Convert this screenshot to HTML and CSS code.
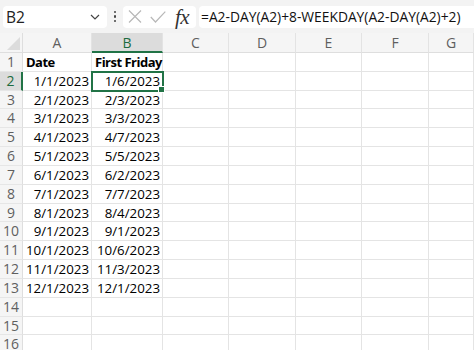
FILE: index.html
```html
<!DOCTYPE html>
<html lang="en">
<head>
  <meta charset="UTF-8">
  <title>First Friday</title>
<link rel="stylesheet" href="styles.css">
</head>
<body>
<div class="formulaBar">
  <div class="nameBox">
    <span>B2</span>
    <svg class="chevron" width="10" height="6" viewBox="0 0 10 6"><path d="M1 1 L5 5 L9 1" fill="none" stroke="#444" stroke-width="1.2"/></svg>
  </div>
  <div class="dots"><i></i><i></i><i></i></div>
  <div class="toolBox">
    <svg width="14" height="13" viewBox="0 0 14 13"><path d="M1 0.5 L13 12.5 M13 0.5 L1 12.5" stroke="#b8b8b8" stroke-width="1.2" fill="none"/></svg>
    <svg width="16" height="12" viewBox="0 0 16 12"><path d="M0.8 6 L5.5 11 L15.3 0.6" stroke="#b8b8b8" stroke-width="1.2" fill="none"/></svg>
    <span class="fx">fx</span>
  </div>
  <div class="formulaInput">=A2-DAY(A2)+8-WEEKDAY(A2-DAY(A2)+2)</div>
</div>

<div class="sheet">
  <div class="corner"></div><div class="colHead">A</div><div class="colHead colHead-active">B</div><div class="colHead">C</div><div class="colHead">D</div><div class="colHead">E</div><div class="colHead">F</div><div class="colHead">G</div>

  <div class="rowHead">1</div><div class="cell bold">Date</div><div class="cell bold">First Friday</div><div class="cell"></div><div class="cell"></div><div class="cell"></div><div class="cell"></div><div class="cell"></div>
  <div class="rowHead rowHead-active">2</div><div class="cell num">1/1/2023</div><div class="cell num cell-active">1/6/2023</div><div class="cell"></div><div class="cell"></div><div class="cell"></div><div class="cell"></div><div class="cell"></div>
  <div class="rowHead">3</div><div class="cell num">2/1/2023</div><div class="cell num">2/3/2023</div><div class="cell"></div><div class="cell"></div><div class="cell"></div><div class="cell"></div><div class="cell"></div>
  <div class="rowHead">4</div><div class="cell num">3/1/2023</div><div class="cell num">3/3/2023</div><div class="cell"></div><div class="cell"></div><div class="cell"></div><div class="cell"></div><div class="cell"></div>
  <div class="rowHead">5</div><div class="cell num">4/1/2023</div><div class="cell num">4/7/2023</div><div class="cell"></div><div class="cell"></div><div class="cell"></div><div class="cell"></div><div class="cell"></div>
  <div class="rowHead">6</div><div class="cell num">5/1/2023</div><div class="cell num">5/5/2023</div><div class="cell"></div><div class="cell"></div><div class="cell"></div><div class="cell"></div><div class="cell"></div>
  <div class="rowHead">7</div><div class="cell num">6/1/2023</div><div class="cell num">6/2/2023</div><div class="cell"></div><div class="cell"></div><div class="cell"></div><div class="cell"></div><div class="cell"></div>
  <div class="rowHead">8</div><div class="cell num">7/1/2023</div><div class="cell num">7/7/2023</div><div class="cell"></div><div class="cell"></div><div class="cell"></div><div class="cell"></div><div class="cell"></div>
  <div class="rowHead">9</div><div class="cell num">8/1/2023</div><div class="cell num">8/4/2023</div><div class="cell"></div><div class="cell"></div><div class="cell"></div><div class="cell"></div><div class="cell"></div>
  <div class="rowHead">10</div><div class="cell num">9/1/2023</div><div class="cell num">9/1/2023</div><div class="cell"></div><div class="cell"></div><div class="cell"></div><div class="cell"></div><div class="cell"></div>
  <div class="rowHead">11</div><div class="cell num">10/1/2023</div><div class="cell num">10/6/2023</div><div class="cell"></div><div class="cell"></div><div class="cell"></div><div class="cell"></div><div class="cell"></div>
  <div class="rowHead">12</div><div class="cell num">11/1/2023</div><div class="cell num">11/3/2023</div><div class="cell"></div><div class="cell"></div><div class="cell"></div><div class="cell"></div><div class="cell"></div>
  <div class="rowHead">13</div><div class="cell num">12/1/2023</div><div class="cell num">12/1/2023</div><div class="cell"></div><div class="cell"></div><div class="cell"></div><div class="cell"></div><div class="cell"></div>
  <div class="rowHead">14</div><div class="cell"></div><div class="cell"></div><div class="cell"></div><div class="cell"></div><div class="cell"></div><div class="cell"></div><div class="cell"></div>
  <div class="rowHead">15</div><div class="cell"></div><div class="cell"></div><div class="cell"></div><div class="cell"></div><div class="cell"></div><div class="cell"></div><div class="cell"></div>
  <div class="rowHead">16</div><div class="cell"></div><div class="cell"></div><div class="cell"></div><div class="cell"></div><div class="cell"></div><div class="cell"></div><div class="cell"></div>
</div>
</body>
</html>
```

FILE: styles.css
```css
html, body {margin:0; padding:0; background:#fff; overflow:hidden;}
body {width:474px; height:350px; font-family:"Open Sans", "Noto Sans", sans-serif; color:#000;}

.formulaBar {display:flex; align-items:center; height:33px; padding:0 0 0 3px; background:#f3f3f3; box-sizing:border-box;}
.nameBox {display:flex; align-items:center; justify-content:space-between; width:104px; height:22px; padding:0 7px 0 3px;
          box-sizing:border-box; background:#fff; border-radius:4px; font-size:15.5px; color:#222;}
.dots {display:flex; flex-direction:column; gap:2px; width:16px; align-items:center;}
.dots i {display:block; width:2.5px; height:2.5px; border-radius:50%; background:#444;}
.toolBox {display:flex; align-items:center; width:73px; height:22px; padding:0 0 0 5px; box-sizing:border-box;
          background:#fff; border-radius:4px; gap:8px;}
.fx {font-family:"Liberation Serif", serif; font-style:italic; font-size:21px; line-height:22px; color:#333; margin-left:1px; letter-spacing:-0.5px;}
.formulaInput {flex:1; height:22px; margin-left:3px; padding-left:2px; background:#fff; border-radius:4px 0 0 4px;
               font-size:13.8px; line-height:22px; color:#111; white-space:nowrap; overflow:hidden;}

.sheet {display:grid; grid-template-columns:23px 69px 71px 66px 67px 66px 67px 1fr;
        grid-template-rows:20px repeat(16, 18.83px); font-size:13.3px;}
.corner {background:#f5f5f5; border-right:1px solid #dedede; border-bottom:1px solid #dedede; position:relative;}
.corner::after {content:""; position:absolute; right:2px; bottom:2px; width:0; height:0;
                border-left:13px solid transparent; border-bottom:13px solid #dcdcdc;}
.colHead {background:#f5f5f5; border-right:1px solid #e3e3e3; border-bottom:1px solid #dedede; text-align:center;
          font-size:14px; line-height:19px; color:#5f5f5f;}
.colHead-active {background:#dcdcdc; color:#1d6b40; border-bottom:2px solid #217346;}
.rowHead {background:#f5f5f5; border-right:1px solid #dedede; border-bottom:1px solid #e6e6e6; text-align:center;
          font-size:14px; line-height:18px; color:#5f5f5f;}
.rowHead-active {background:#dcdcdc; color:#1d6b40; border-right:2px solid #217346;}
.cell {border-right:1px solid #e4e4e4; border-bottom:1px solid #e4e4e4; line-height:18px; padding:0 2px 0 3px;
       white-space:nowrap; overflow:visible;}
.num {text-align:right;}
.bold {font-weight:bold; font-size:13px; letter-spacing:-0.5px;}
.cell-active {position:relative; outline:2px solid #217346; outline-offset:-1px;}
.cell-active::after {content:""; position:absolute; right:-3px; bottom:-3px; width:5px; height:5px; background:#217346; border:1px solid #fff;}
```
